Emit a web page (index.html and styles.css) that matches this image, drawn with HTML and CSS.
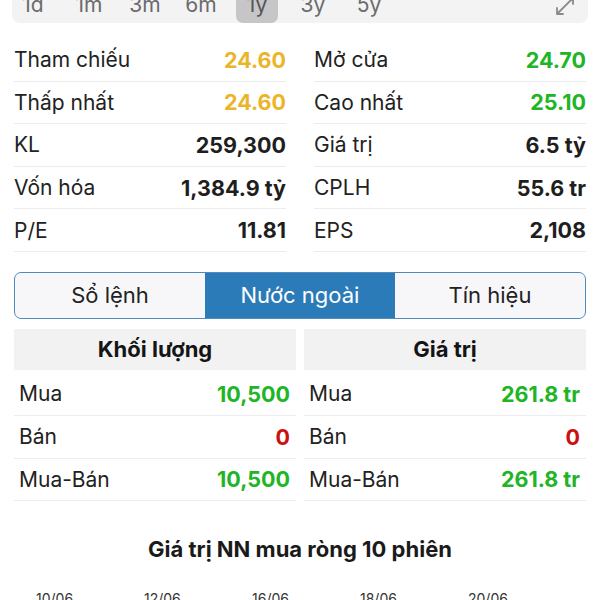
FILE: index.html
```html
<!DOCTYPE html>
<html lang="vi">
<head>
<meta charset="utf-8">
<link rel="stylesheet" href="styles.css">
</head>
<body>
<div class="page">
  <div class="range-bar">
    <div class="ranges">
      <span class="range">1d</span>
      <span class="range">1m</span>
      <span class="range">3m</span>
      <span class="range">6m</span>
      <span class="range active">1y</span>
      <span class="range">3y</span>
      <span class="range">5y</span>
    </div>
    <svg class="expand" width="22" height="22" viewBox="0 0 22 22">
      <path d="M3 19 L19 3 M3 19 L3 13 M3 19 L9 19 M19 3 L13 3 M19 3 L19 9" fill="none" stroke="#8a8a8a" stroke-width="1.8" stroke-linecap="round" stroke-linejoin="round"/>
    </svg>
  </div>

  <div class="stats">
    <div class="stat"><span class="label">Tham chiếu</span><span class="val yellow">24.60</span></div>
    <div class="stat"><span class="label">Mở cửa</span><span class="val green">24.70</span></div>
    <div class="stat"><span class="label">Thấp nhất</span><span class="val yellow">24.60</span></div>
    <div class="stat"><span class="label">Cao nhất</span><span class="val green">25.10</span></div>
    <div class="stat"><span class="label">KL</span><span class="val">259,300</span></div>
    <div class="stat"><span class="label">Giá trị</span><span class="val">6.5 tỷ</span></div>
    <div class="stat"><span class="label">Vốn hóa</span><span class="val">1,384.9 tỷ</span></div>
    <div class="stat"><span class="label">CPLH</span><span class="val">55.6 tr</span></div>
    <div class="stat"><span class="label">P/E</span><span class="val">11.81</span></div>
    <div class="stat"><span class="label">EPS</span><span class="val">2,108</span></div>
  </div>

  <div class="tabs">
    <div class="tab">Sổ lệnh</div>
    <div class="tab selected">Nước ngoài</div>
    <div class="tab">Tín hiệu</div>
  </div>

  <div class="foreign">
    <div class="col">
      <div class="col-head">Khối lượng</div>
      <div class="frow"><span class="label">Mua</span><span class="val green">10,500</span></div>
      <div class="frow"><span class="label">Bán</span><span class="val red">0</span></div>
      <div class="frow"><span class="label">Mua-Bán</span><span class="val green">10,500</span></div>
    </div>
    <div class="col">
      <div class="col-head">Giá trị</div>
      <div class="frow"><span class="label">Mua</span><span class="val green">261.8 tr</span></div>
      <div class="frow"><span class="label">Bán</span><span class="val red">0</span></div>
      <div class="frow"><span class="label">Mua-Bán</span><span class="val green">261.8 tr</span></div>
    </div>
  </div>

  <div class="chart-title">Giá trị NN mua ròng 10 phiên</div>

  <div class="dates">
    <span class="date">10/06</span>
    <span class="date">12/06</span>
    <span class="date">16/06</span>
    <span class="date">18/06</span>
    <span class="date">20/06</span>
  </div>
</div>
</body>
</html>
```

FILE: styles.css
```css
html, body {
  margin: 0;
  padding: 0;
  background: #ffffff;
  overflow: hidden;
}

.page {
  width: 600px;
  height: 600px;
  overflow: hidden;
  font-family: Inter, "Noto Sans", "Liberation Sans", sans-serif;
  color: #222222;
}

.range-bar {
  margin: -16px 12px 0 12px;
  height: 39px;
  background: #f3f3f4;
  border-radius: 0 0 8px 8px;
  display: flex;
  align-items: center;
  justify-content: space-between;
  padding: 0 10px 0 0;
  box-sizing: border-box;
}

.ranges {
  display: flex;
  gap: 14px;
  height: 100%;
}

.range {
  width: 42px;
  height: 100%;
  display: flex;
  align-items: center;
  justify-content: center;
  padding-top: 1px;
  box-sizing: border-box;
  font-size: 21px;
  color: #6b6b6b;
  border-radius: 0 0 7px 7px;
}

.range.active {
  background: #c6c6c8;
  color: #555555;
}

.expand {
  margin-right: 2px;
  margin-top: 5px;
}

.stats {
  display: grid;
  grid-template-columns: 1fr 1fr;
  column-gap: 28px;
  padding: 16px 14px 0 14px;
}

.stat {
  display: flex;
  justify-content: space-between;
  align-items: center;
  height: 41.6px;
  border-bottom: 1px solid #ececee;
  font-size: 21px;
}

.label {
  color: #222222;
}

.val {
  font-size: 21.5px;
  font-weight: 700;
  color: #1e1e1e;
}

.yellow { color: #ebb52a; }
.green { color: #20b524; }
.red { color: #cc1010; }

.tabs {
  margin: 20px 14px 0 14px;
  height: 47px;
  display: grid;
  grid-template-columns: 1fr 1fr 1fr;
  border: 1.5px solid #4f8bbf;
  border-radius: 7px;
  overflow: hidden;
  box-sizing: border-box;
  background: #f7f7f9;
}

.tab {
  display: flex;
  align-items: center;
  justify-content: center;
  font-size: 22px;
  color: #222222;
}

.tab.selected {
  background: #2b7bb9;
  color: #ffffff;
}

.foreign {
  display: grid;
  grid-template-columns: 1fr 1fr;
  column-gap: 8px;
  margin: 10px 14px 0 14px;
}

.col-head {
  height: 41px;
  background: #f2f2f3;
  display: flex;
  align-items: center;
  justify-content: center;
  font-size: 22px;
  font-weight: 700;
  color: #151515;
  margin-bottom: 3px;
}

.frow {
  display: flex;
  justify-content: space-between;
  align-items: center;
  height: 41.8px;
  padding: 0 6px 0 5px;
  border-bottom: 1px solid #ececee;
  font-size: 21px;
}

.chart-title {
  margin-top: 35px;
  text-align: center;
  font-size: 22px;
  font-weight: 700;
  color: #1a1a1a;
  line-height: 26px;
}

.dates {
  display: flex;
  padding-left: 36px;
  margin-top: 28px;
}

.date {
  width: 108px;
  font-size: 14px;
  color: #333333;
  line-height: 18px;
}
```
